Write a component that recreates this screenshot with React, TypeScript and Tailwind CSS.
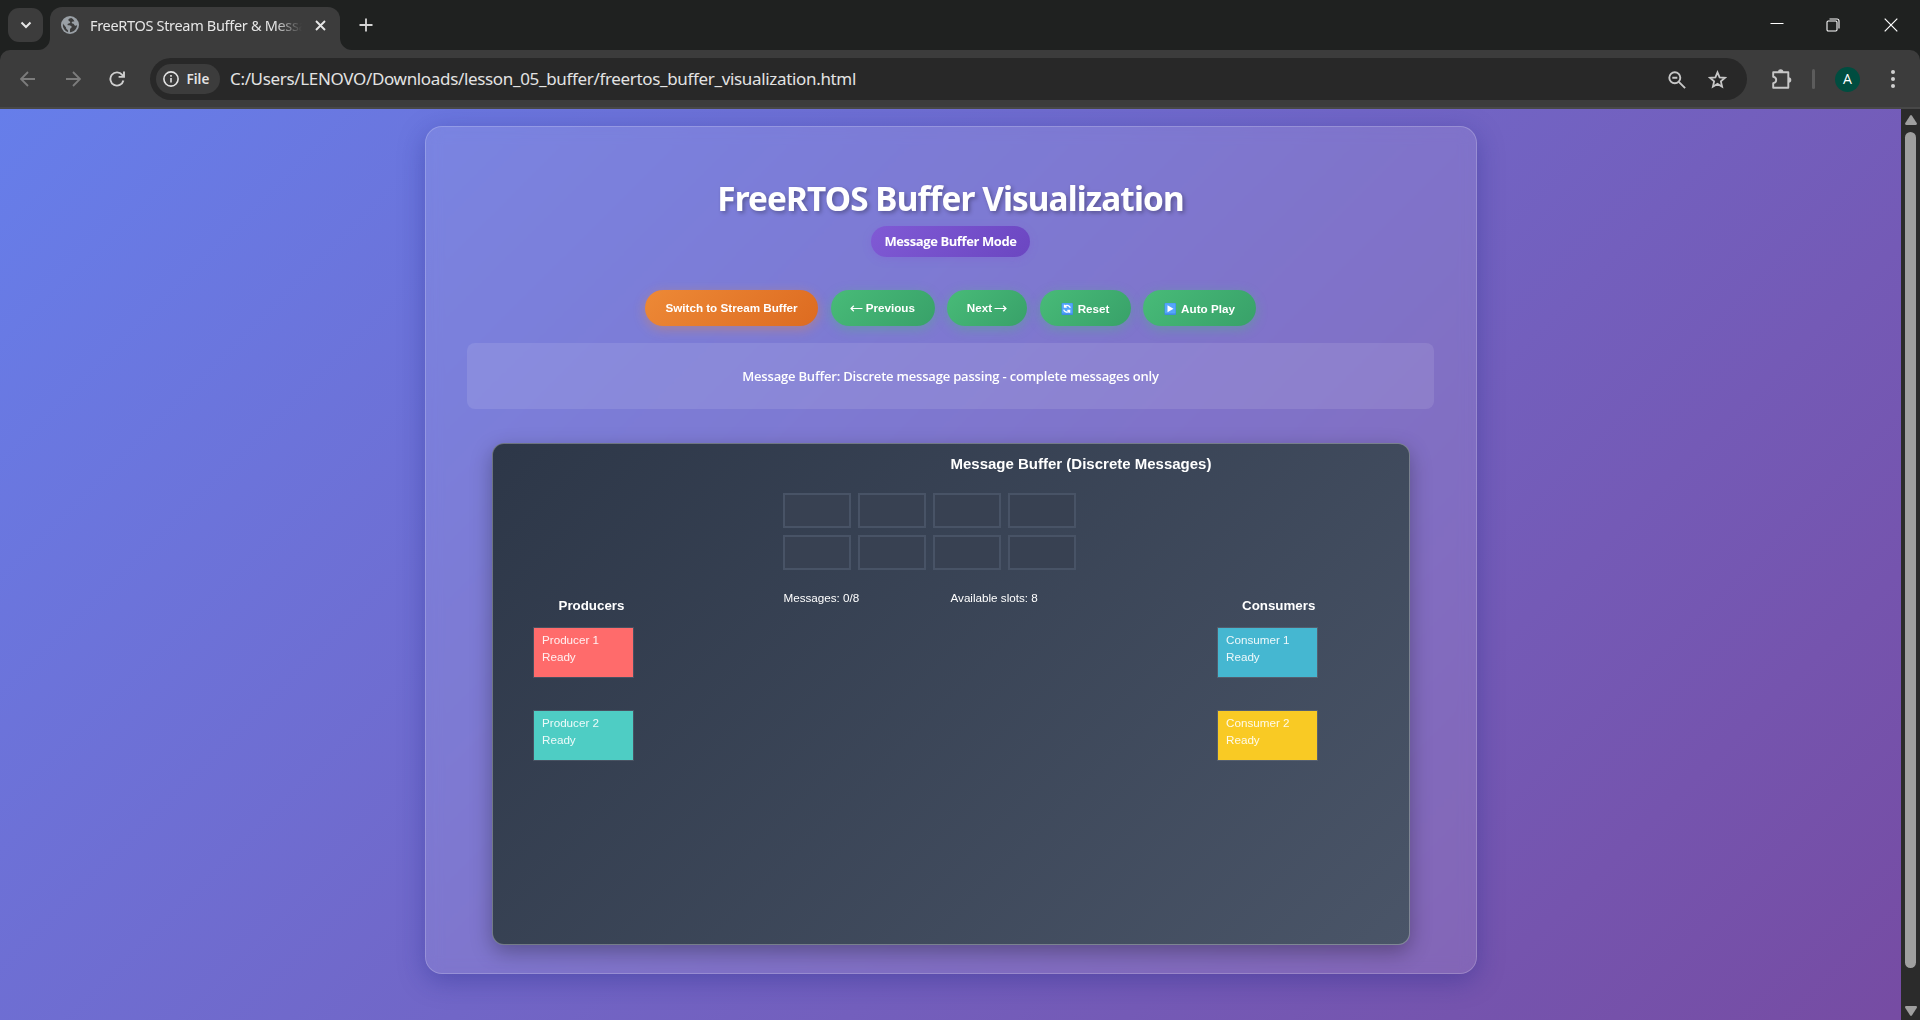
import type { ReactNode } from "react";

function TabStrip() {
  return (
    <div className="flex h-[50px] bg-[#1f2120]">
      <div className="flex w-[50px] items-start pl-2 pt-2">
        <button className="flex h-[34px] w-[35px] items-center justify-center rounded-[11px] bg-[#3c3c3c]">
          <svg width="12" height="8" viewBox="0 0 12 8" fill="none" stroke="#e6e6e6" strokeWidth="2">
            <path d="M1.5 1.5 6 6l4.500-4.500" />
          </svg>
        </button>
      </div>
      <div className="relative mt-[7px] flex h-[43px] w-[290px] items-center rounded-t-[12px] bg-[#3c3c3c] pb-[7px] pl-[11px]">
        <svg className="absolute -left-3 bottom-0" width="12" height="12" viewBox="0 0 12 12">
          <path d="M12 0v12H0A12 12 0 0 0 12 0Z" fill="#3c3c3c" />
        </svg>
        <svg className="absolute -right-3 bottom-0" width="12" height="12" viewBox="0 0 12 12">
          <path d="M0 0v12h12A12 12 0 0 1 0 0Z" fill="#3c3c3c" />
        </svg>
        <svg width="18" height="18" viewBox="0 0 18 18">
          <circle cx="9" cy="9" r="9" fill="#9aa0a6" />
          <path
            d="M10.200 1.900C7.600 2.500 7.200 3.400 7.400 4.300c.3 1 1.500.9 1.800 1.700.2.900-.5 1.300-1.500 1.500-1.300.2-1.400 1.200-.9 1.800.6.500 1.900.1 2.900.5 1.300.5 1.200 1.700.4 2.300-.8.500-1.100.9-1.100 2.100v2.100c3.900-.1 7-3.300 7.100-7.200-.6.600-1.400.8-2.200.4-.9-.4-.5-1.400-1.500-1.800-.8-.3-1.600 0-1.700-.9-.1-.8.7-1.400 1.600-1.400h1.100C12.700 3.600 11.600 2.400 10.200 1.900ZM2 7.400C1.300 11 3.300 14.600 7 15.900c.4-1-.1-1.800-.9-2.300-1-.6-.9-1.500-1.300-2.500C4.300 10 2.900 9.100 2 7.400Z"
            fill="#3c3c3c"
          />
        </svg>
        <span className="ml-[11px] w-[212px] overflow-hidden whitespace-nowrap font-['Noto_Sans',sans-serif] text-[14.5px] leading-5 tracking-[-0.32px] text-[#e6e6e6] [mask-image:linear-gradient(to_right,black_184px,transparent_212px)]">
          FreeRTOS Stream Buffer &amp; Message Buffer
        </span>
        <svg className="ml-[12.500px]" width="11" height="11" viewBox="0 0 11 11" stroke="#e6e6e6" strokeWidth="1.9">
          <path d="m1 1 9 9M10 1l-9 9" />
        </svg>
      </div>
      <svg className="ml-[19px] mt-[18px]" width="14" height="14" viewBox="0 0 14 14" stroke="#d5d5d5" strokeWidth="1.8">
        <path d="M7 .5v13M.5 7h13" />
      </svg>
      <div className="ml-auto flex pr-[22px] pt-[17.500px] text-white">
        <svg className="mr-[42px]" width="14" height="14" viewBox="0 0 14 14" stroke="currentColor">
          <path d="M.5 5.500h13" />
        </svg>
        <svg className="mr-[44px]" width="14" height="14" viewBox="0 0 14 14" fill="none" stroke="currentColor" strokeWidth="1.1">
          <rect x="1" y="3" width="10" height="10" rx="1.200" />
          <path d="M3.500 1H11a2 2 0 0 1 2 2v7.500" />
        </svg>
        <svg width="14" height="14" viewBox="0 0 14 14" stroke="currentColor" strokeWidth="1.200">
          <path d="m.700.700 12.600 12.600M13.300.700.700 13.300" />
        </svg>
      </div>
    </div>
  );
}

function Toolbar() {
  return (
    <div className="bg-[#1f2120]">
      <div className="flex h-[59px] items-start rounded-t-[10px] border-b-2 border-[#484848] bg-[#3c3c3c] pt-2">
        <div className="flex h-[42px] w-[150px] items-center pl-5">
          <svg width="16" height="16" viewBox="0 0 16 16" fill="none" stroke="#7c7c7c" strokeWidth="1.800">
            <path d="M15 8H1.500M8 1 1 8l7 7" />
          </svg>
          <svg className="ml-[28.500px]" width="16" height="16" viewBox="0 0 16 16" fill="none" stroke="#7c7c7c" strokeWidth="1.800">
            <path d="M1 8h13.500M8 1l7 7-7 7" />
          </svg>
          <svg className="ml-[28.500px]" width="16" height="16" viewBox="0 0 16 16" fill="none" stroke="#d0d0d0" strokeWidth="1.900">
            <path d="M14.400 9.500A6.600 6.600 0 1 1 13.200 3.900L14.800 5.800M15 .5v5.400H9.600" />
          </svg>
        </div>
        <div className="flex h-[42px] w-[1597px] items-center rounded-full bg-[#282828] pl-[6px] pr-5">
          <div className="flex h-[30px] w-[64px] items-center rounded-full bg-[#3c3c3c] pl-[7px]">
            <svg width="16" height="16" viewBox="0 0 16 16" fill="none" stroke="#e3e3e3" strokeWidth="1.600">
              <circle cx="8" cy="8" r="7.100" />
              <path d="M8 7v4.500M8 4v1.700" />
            </svg>
            <span className="ml-[7.500px] font-['Noto_Sans',sans-serif] text-[13.5px] font-semibold leading-5 text-[#e3e3e3]">File</span>
          </div>
          <span className="ml-[10px] whitespace-nowrap font-['Noto_Sans',sans-serif] text-[17px] leading-6 tracking-[-0.335px] text-[#e3e3e3]">
            C:/Users/LENOVO/Downloads/lesson_05_buffer/freertos_buffer_visualization.html
          </span>
          <svg className="ml-auto mt-px" width="18" height="18" viewBox="0 0 18 18" fill="none" stroke="#c7c7c7" strokeWidth="1.900">
            <circle cx="6.800" cy="6.800" r="5.500" />
            <path d="m10.800 10.800 6.300 6.300M4.300 6.800h5" />
          </svg>
          <svg className="ml-[22px] mt-px" width="19" height="19" viewBox="0 0 19 19" fill="none" stroke="#c7c7c7" strokeWidth="1.800">
            <path d="m9.500 2.300 2.100 5 5.400.5-4.100 3.600 1.200 5.300-4.600-2.800-4.600 2.800 1.200-5.300L2 7.800l5.400-.5Z" />
          </svg>
        </div>
        <div className="flex h-[42px] flex-1 items-center">
          <svg className="ml-6" width="21" height="21" viewBox="0 0 21 21">
            <path
              d="M2.200 3.300h15.100v15.400H2.200v-4.500c2.200-.4 3-1.700 3-3.200s-.8-2.800-3-3.200Z"
              fill="none"
              stroke="#c7c7c7"
              strokeWidth="1.900"
              strokeLinejoin="round"
            />
            <path d="M7 3a2.700 2.700 0 0 1 5.400 0ZM17.600 8.300a2.700 2.700 0 0 1 0 5.400Z" fill="#c7c7c7" />
          </svg>
          <div className="ml-5 h-5 w-[3px] rounded bg-[#5c5c5c]" />
          <div className="ml-5 flex h-[25px] w-[25px] items-center justify-center rounded-full bg-[#004d40] font-['Open_Sans',sans-serif] text-[14px] font-medium leading-none text-white">
            A
          </div>
          <svg className="ml-[30.500px]" width="4" height="18" viewBox="0 0 4 18" fill="#d0d0d0">
            <circle cx="2" cy="2" r="2" />
            <circle cx="2" cy="9" r="2" />
            <circle cx="2" cy="16" r="2" />
          </svg>
        </div>
      </div>
    </div>
  );
}

function Scrollbar() {
  return (
    <div className="flex w-[19px] flex-col items-center bg-[#2b2b2b] pb-[4px] pt-[6px]">
      <svg width="12" height="10" viewBox="0 0 12 10" fill="#9f9f9f">
        <path d="M5 .7a1.300 1.300 0 0 1 2 0l4.700 7.300c.5.900.2 2-1 2H1.300c-1.200 0-1.500-1.100-1-2Z" />
      </svg>
      <div className="mt-[7px] h-[836px] w-[11px] rounded-full bg-[#9f9f9f]" />
      <svg className="mt-auto" width="12" height="10" viewBox="0 0 12 10" fill="#9f9f9f">
        <path d="M5 9.300a1.300 1.300 0 0 0 2 0l4.700-7.300c.5-.9.2-2-1-2H1.300C.1 0-.2 1.100.3 2Z" />
      </svg>
    </div>
  );
}

const buttonBase =
  "flex h-9 items-center justify-center whitespace-nowrap rounded-[21px] font-['Liberation_Sans',Arial,sans-serif] text-[11.67px] font-bold text-white";
const green = "bg-linear-135 from-[#48bb78] to-[#38a169] shadow-[0_3px_12px_rgba(72,187,120,0.4)]";
const orange = "bg-linear-135 from-[#ed8936] to-[#dd6b20] shadow-[0_3px_12px_rgba(237,137,54,0.4)]";

function Button({ className, children }: { className: string; children: ReactNode }) {
  return <button className={`${buttonBase} ${className}`}>{children}</button>;
}

function Arrow({ flip = false }: { flip?: boolean }) {
  return (
    <svg className={flip ? "mt-px rotate-180" : "mt-px"} width="13" height="7" viewBox="0 0 13 7" fill="none" stroke="white" strokeWidth="1.200">
      <path d="M12.500 3.500H1M3.800.8 1 3.500l2.800 2.700" />
    </svg>
  );
}

function EmojiTile({ children }: { children: ReactNode }) {
  return (
    <svg className="mr-[5px]" width="12" height="12" viewBox="0 0 12 12">
      <rect x=".5" width="11.500" height="12" rx="1" fill="#3f8be3" />
      <rect x="1" y=".300" width="10.500" height="10.300" rx=".8" fill="#55a6fb" />
      {children}
    </svg>
  );
}

function Task({ name, className }: { name: string; className: string }) {
  return (
    <div
      className={`h-[51px] w-[101px] border border-white/10 bg-clip-padding pl-2 pt-[3px] text-[11.67px] leading-[17px] text-white/90 ${className}`}
    >
      <div>{name}</div>
      <div>Ready</div>
    </div>
  );
}

function BufferCanvas() {
  return (
    <div className="relative ml-[25px] mt-[34px] h-[502px] w-[918px] rounded-[12px] border border-white/30 bg-linear-135 from-[#2d3748] to-[#4a5568] bg-origin-border font-['Liberation_Sans',Arial,sans-serif] leading-5 text-white shadow-[0_7px_21px_rgba(0,0,0,0.3)]">
      <div className="absolute left-[457.500px] top-[10px] whitespace-nowrap text-[15px] font-bold">Message Buffer (Discrete Messages)</div>
      <div className="absolute left-[290px] top-[49px] grid grid-cols-[repeat(4,68px)] gap-x-[7px] gap-y-[7px]">
        {Array.from({ length: 8 }, (_, i) => (
          <div key={i} className="h-[35px] border-2 border-[#485366] bg-[#384152]" />
        ))}
      </div>
      <div className="absolute left-[290.500px] top-[144px] whitespace-nowrap text-[11.67px]">Messages: 0/8</div>
      <div className="absolute left-[457.500px] top-[144px] whitespace-nowrap text-[11.67px]">Available slots: 8</div>

      <div className="absolute left-[65.500px] top-[152px] whitespace-nowrap text-[13.33px] font-bold">Producers</div>
      <div className="absolute left-[40px] top-[183px] flex flex-col gap-8">
        <Task name="Producer 1" className="bg-[#ff6b6b]" />
        <Task name="Producer 2" className="bg-[#4ecdc4]" />
      </div>

      <div className="absolute left-[749px] top-[152px] whitespace-nowrap text-[13.33px] font-bold">Consumers</div>
      <div className="absolute left-[724px] top-[183px] flex flex-col gap-8">
        <Task name="Consumer 1" className="bg-[#45b7d1]" />
        <Task name="Consumer 2" className="bg-[#f9ca24]" />
      </div>
    </div>
  );
}

export default function App() {
  return (
    <div className="flex h-[1020px] w-[1920px] flex-col overflow-hidden">
      <TabStrip />
      <Toolbar />
      <div className="flex h-[911px]">
        <main className="w-[1901px] overflow-hidden bg-linear-135 from-[#667eea] to-[#764ba2] bg-[length:100%_946px] pt-[17px] font-['Noto_Sans','Open_Sans',sans-serif]">
          <section className="ml-[425px] h-[848px] w-[1052px] rounded-[17px] border border-white/20 bg-white/10 pl-[41px] pr-[42px] pt-[49px] text-center text-white shadow-[0_7px_27px_rgba(31,38,135,0.37)] backdrop-blur-[8px]">
            <h1 className="h-[42px] whitespace-nowrap pt-px text-[33.33px] font-bold leading-[42px] tracking-[-0.9px] [text-shadow:2px_2px_4px_rgba(0,0,0,0.3)]">
              FreeRTOS Buffer Visualization
            </h1>
            <div className="mx-auto mt-2 flex h-[31px] w-[159px] items-center justify-center whitespace-nowrap rounded-[16px] bg-linear-135 from-[#805ad5] to-[#6b46c1] pt-px font-['Open_Sans',sans-serif] text-[13px] font-bold tracking-[-0.4px] shadow-[0_2px_8px_rgba(128,90,213,0.3)]">
              Message Buffer Mode
            </div>
            <div className="mt-[33px] flex justify-center gap-[12.500px]">
              <Button className={`w-[173px] ${orange}`}>Switch to Stream Buffer</Button>
              <Button className={`w-[104px] ${green}`}>
                <Arrow />
                <span className="ml-[2.500px]">Previous</span>
              </Button>
              <Button className={`w-[80px] ${green}`}>
                <span className="mr-[2px]">Next</span>
                <Arrow flip />
              </Button>
              <Button className={`w-[91px] pt-[2px] ${green}`}>
                <EmojiTile>
                  <path
                    d="M9.300 4.800A3.300 3.300 0 0 0 4 3.200M2.700 6.600A3.300 3.300 0 0 0 8 8.300M3.500 1.800v2.300h2.300M8.600 9.700V7.400H6.300"
                    fill="none"
                    stroke="white"
                    strokeWidth="1.300"
                  />
                </EmojiTile>
                Reset
              </Button>
              <Button className={`w-[113px] pt-[2px] ${green}`}>
                <EmojiTile>
                  <path d="M3.500 2.300v7l6-3.500Z" fill="white" />
                </EmojiTile>
                Auto Play
              </Button>
            </div>
            <div className="mt-[17px] flex h-[66px] items-center justify-center whitespace-nowrap rounded-[8px] bg-white/10 pt-[2px] font-['Open_Sans',sans-serif] text-[13px] font-semibold tracking-[-0.19px]">
              Message Buffer: Discrete message passing - complete messages only
            </div>
            <div className="text-left">
              <BufferCanvas />
            </div>
          </section>
        </main>
        <Scrollbar />
      </div>
    </div>
  );
}
